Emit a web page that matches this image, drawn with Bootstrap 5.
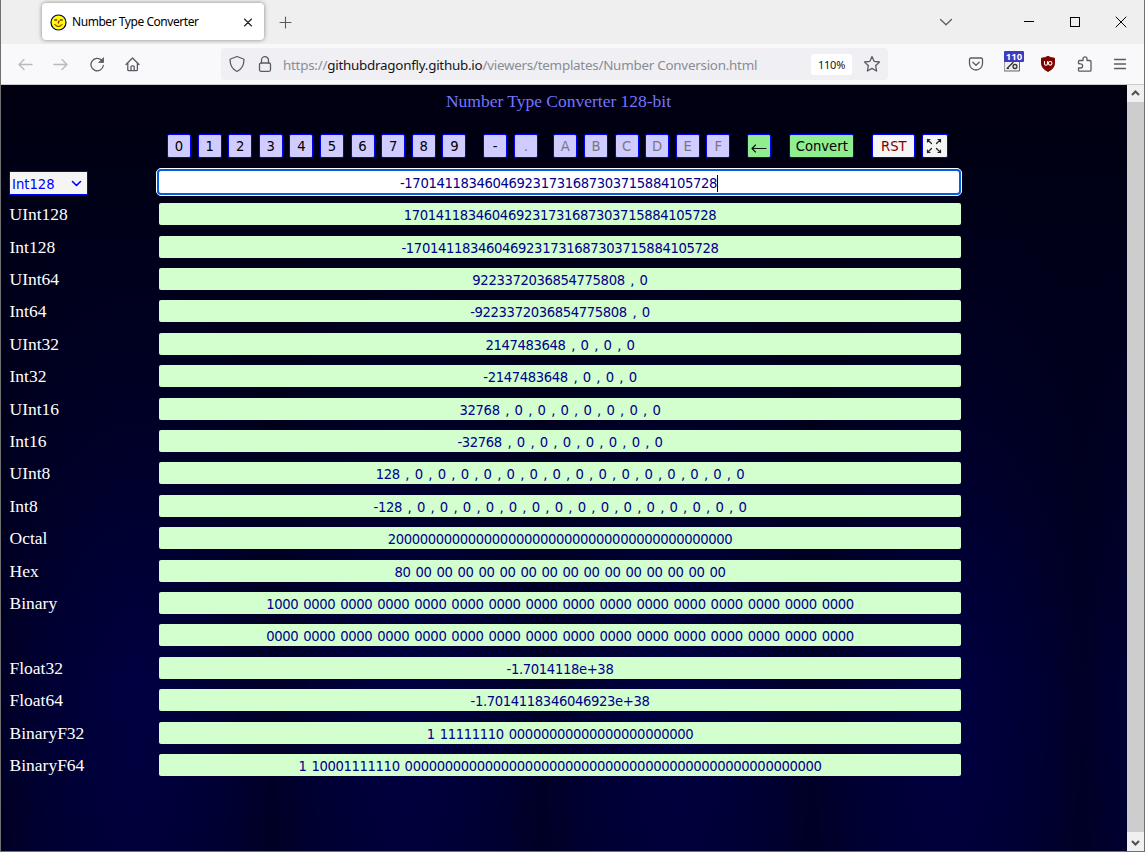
<!DOCTYPE html>
<html lang="en">
<head>
<meta charset="utf-8">
<title>Number Type Converter</title>
<link rel="stylesheet" href="https://cdn.jsdelivr.net/npm/bootstrap@5.3.0/dist/css/bootstrap.min.css">
<style>
html,body{height:100%;overflow:hidden}
body{background:#f9f9fb;font-family:"Noto Sans","Open Sans",sans-serif;font-size:12px;line-height:1.2;color:#15141a}
.win{width:1145px;height:852px;border:solid #707070;border-width:0 1px 1px 1px}
.tabstrip{height:44px;background:#efefef}
.tab-active{width:222px;height:37px;margin:3px 0 0 41px;padding:2px 9px 0 8px;background:#fff;border-radius:4px;box-shadow:0 0 4px rgba(0,0,0,.45);font-size:12px;letter-spacing:-.45px;color:#000}
.navrow{height:41px;background:#f9f9fb;border-bottom:1px solid #ccc}
.urlbox{width:667px;height:32px;background:#f0f0f4;border-radius:4px;margin-left:80px;padding:0 7px 0 7px}
.url{font-size:13.4px;color:#8b8b93;margin-left:9px;letter-spacing:-.245px;white-space:nowrap;padding-top:2px}
.url b{font-weight:400;color:#15141a}
.zoomlevel{width:41px;height:21px;background:#fff;border-radius:3px;font-size:11px;letter-spacing:-.2px;padding-top:1px}
svg{display:block;flex:none;fill:none;stroke:#5b5b66;stroke-width:1.3;stroke-linecap:round;stroke-linejoin:round}
.sharp{stroke:#000;stroke-width:1;stroke-linecap:butt;shape-rendering:crispEdges}
.page{height:766px}
.canvas{width:1126px;background-color:#000018;
 background-image:linear-gradient(#000011 0,rgba(0,0,24,.8) 22%,rgba(0,0,28,0) 78%),radial-gradient(ellipse 160px 560px at 136px 590px,#000042,#000038 40%,#00002e 70%,#000020 100%);background-size:100% 100%,270px 766px;background-repeat:no-repeat,repeat-x}
.scroller{width:17px;background:#cdcdcd}
.scroller div{height:17px;background:#f0f0f0}
.pagetitle{font:17.5px/20px "Liberation Serif",serif;color:#7474ff;letter-spacing:-.01px;padding-top:6px;height:27px;width:1115px;text-align:center}
.ui{font-family:"DejaVu Sans Condensed","DejaVu Sans",sans-serif;font-stretch:condensed;font-size:14.67px}
.keys{margin:22px 0 0 166px;gap:6.6px;height:24px}
.key{width:24px;height:24px;flex:none;border:1.5px solid #00f;border-radius:2px;background:#d0ccff;color:#000;padding:1px 0 0;line-height:1;display:flex;align-items:center;justify-content:center}
.key:disabled{color:#777780}
.key.go{background:#90ee90}
.key.plain{background:#f5f5f5;color:#800000}
.line{height:32.41px}
.lab{width:158px;padding-left:8.5px;font:17.5px/22px "Liberation Serif",serif;color:#fff}
.out{width:802px;height:22px;background:#d3ffce;border-radius:2px;color:#00008b;text-align:center;line-height:23px;letter-spacing:-.37px;word-spacing:1.15px;white-space:pre}
.out.list{word-spacing:1.75px}
.pick{width:79px;height:24px;margin:1px 0 0 -.500px;background:#f5f5f5;border:1px solid #00f;border-radius:1px;color:#00f;padding:2px 5px 0 2px;letter-spacing:0}
.entry{width:806px;height:28px;margin-left:-3px;background:#fff;border:1px solid #fff;border-radius:5px;padding:0}
.entry div{height:26px;border:2px solid #0060df;border-radius:4px;line-height:23px;color:#00008b;letter-spacing:-.37px;text-align:center}
.caret{display:inline-block;width:1px;height:17px;background:#000;vertical-align:-4px}
</style>
</head>
<body>
<div class="win d-flex flex-column">
 <div class="tabstrip d-flex">
  <div class="tab-active d-flex align-items-center">
   <svg width="17" height="17" viewBox="0 0 17 17"><circle cx="8.500" cy="8.500" r="7.500" fill="#ff0" stroke="#00004a" stroke-width="1.200"/><path d="M4.800 6h1.800M10.400 6h1.800M9 7L8.300 9" stroke="#90180a" stroke-width="1.300"/><path d="M4.800 10.500q3.600 4 7.200 0" stroke="#7a3000" stroke-width="1.100"/></svg>
   <span class="ms-1 flex-grow-1" style="padding-left:1px">Number Type Converter</span>
   <svg width="14" height="14" viewBox="0 0 14 14"><path d="M3.500 3l7 7M10.500 3l-7 7" stroke="#222" stroke-width="1.1"/></svg>
  </div>
  <svg width="14" height="14" viewBox="0 0 14 14" style="margin:15px 0 0 14px"><path d="M7.500 2v11M2 7.500h11" stroke-width="1.1"/></svg>
  <svg class="ms-auto" width="14" height="14" viewBox="0 0 14 14" style="margin-top:15px"><path d="M1.5 4.500L7 9.800l5.500-5.300"/></svg>
  <svg class="sharp" width="12" height="12" viewBox="0 0 12 12" style="margin:16px 0 0 70px"><path d="M1 5.500h10"/></svg>
  <svg class="sharp" width="12" height="12" viewBox="0 0 12 12" style="margin:16px 0 0 34px"><path d="M1.500 1.500h9v9h-9z"/></svg>
  <svg width="12" height="12" viewBox="0 0 12 12" style="margin:16px 17px 0 34px"><path d="M1 1l10 10M11 1L1 11" stroke="#000" stroke-width="1"/></svg>
 </div>
 <div class="navrow d-flex align-items-center">
  <svg width="16" height="16" viewBox="0 0 16 16" style="margin-left:16px"><path d="M7 3.500L2 8.500 7 13.500M2 8.500H15" stroke="#b9b9c0"/></svg>
  <svg width="16" height="16" viewBox="0 0 16 16" style="margin-left:20px"><path d="M9 3.500L14 8.500 9 13.500M14 8.500H1" stroke="#b9b9c0"/></svg>
  <svg width="16" height="16" viewBox="0 0 16 16" style="margin-left:20px"><path d="M14.300 9.500A6.200 6.200 0 1 1 12.800 4.500"/><path d="M10 6.500h4.500V2z" fill="#5b5b66" stroke-width=".8"/></svg>
  <svg width="16" height="16" viewBox="0 0 16 16" style="margin-left:20px"><path d="M1 8.500L7.500 2 14 8.500M2.800 7v6.800q0 .9.900.900h7.800q.9 0 .9-.9V7M6 14.500V10.800q0-1 1-1h1.200q1 0 1 1v3.700"/></svg>
  <div class="urlbox d-flex align-items-center">
   <svg width="18" height="18" viewBox="0 0 18 18"><path d="M9 1.500l6.500 2.500q.5.200.5.800C15.800 10.500 13.500 14.500 9 16.500 4.500 14.500 2.200 10.500 2 4.800q0-.6.5-.8z"/></svg>
   <svg width="18" height="18" viewBox="0 0 18 18" style="margin-left:10px"><rect x="3.500" y="8" width="11" height="8.300" rx="1.500"/><path d="M5.500 8V5.200a3.500 3.500 0 0 1 7 0V8"/></svg>
   <span class="url">https://<b>githubdragonfly.github.io</b>/viewers/templates/Number Conversion.html</span>
   <span class="zoomlevel ms-auto d-flex align-items-center justify-content-center">110%</span>
   <svg width="18" height="18" viewBox="0 0 18 18" style="margin-left:11px"><path d="M9 1.500l2.200 4.900 5.300.6-3.900 3.700 1 5.300L9 13.400 4.400 16l1-5.300L1.500 7l5.300-.6z"/></svg>
  </div>
  <svg width="16" height="16" viewBox="0 0 16 16" style="margin-left:80px"><path d="M3 2h10q1.500 0 1.500 1.500v4a6.500 6.500 0 0 1-13 0v-4Q1.500 2 3 2zM4.800 6.300L8 9.300l3.200-3"/></svg>
  <div class="position-relative" style="width:20px;height:21px;margin:-5px 0 0 20px">
   <svg width="20" height="21" viewBox="0 0 20 21"><path d="M.5 9.500h15v10.500H.5z" fill="#eee" stroke="#666" stroke-width="1"/><path d="M3.500 17L9 11.500M3 17.300h1.500" stroke="#333"/><circle cx="11" cy="15.500" r="2" stroke="#333"/></svg>
   <span class="position-absolute top-0 start-0 text-white text-center" style="width:20px;height:11px;border-radius:1px;background:#3b3bc4;font:bold 9.500px/11px 'Noto Sans',sans-serif;letter-spacing:0">110</span>
  </div>
  <svg width="16" height="16" viewBox="0 0 16 16" style="margin-left:16px"><path d="M8 .5q3.500 1.500 6.500 1.700V7q0 5.500-6.500 8.500Q1.500 12.500 1.500 7V2.200Q4.500 2 8 .5z" fill="#800000" stroke="#800000" stroke-width="1"/><path d="M4.500 5.500v2.200a1.500 1.500 0 0 0 3 0V5.500" stroke="#fff" stroke-width="1.100"/><circle cx="10.200" cy="7.300" r="1.800" stroke="#fff" stroke-width="1.100"/></svg>
  <svg width="18" height="18" viewBox="0 0 18 18" style="margin-left:20px"><path d="M2.500 8.500V6.500q0-1 1-1H7V3.800a2 2 0 0 1 4 0v1.700h3q1 0 1 1v8.700q0 1-1 1H3.500q-1 0-1-1V13h2a1.900 1.900 0 0 0 0-4.200z"/></svg>
  <svg width="16" height="16" viewBox="0 0 16 16" style="margin-left:18px"><path d="M2.500 3.500h11M2.500 8h11M2.500 12.500h11"/></svg>
 </div>
 <div class="page d-flex">
  <main class="canvas">
   <div class="pagetitle">Number Type Converter 128-bit</div>
   <div class="keys ui d-flex">
    <button class="key">0</button><button class="key">1</button><button class="key">2</button><button class="key">3</button><button class="key">4</button><button class="key">5</button><button class="key">6</button><button class="key">7</button><button class="key">8</button><button class="key">9</button>
    <button class="key" style="margin-left:10.300px">-</button><button class="key" disabled>.</button>
    <button class="key" style="margin-left:8.900px" disabled>A</button><button class="key" disabled>B</button><button class="key" disabled>C</button><button class="key" disabled>D</button><button class="key" disabled>E</button><button class="key" disabled>F</button>
    <button class="key go" style="margin-left:10.300px"><svg width="16" height="12" viewBox="0 0 16 12" style="stroke:#111;stroke-width:1.100"><path d="M4.500 4L1 7.500 4.500 11M1 7.500h14"/></svg></button>
    <button class="key go" style="margin-left:11.500px;width:65px;letter-spacing:0">Convert</button>
    <button class="key plain" style="margin-left:11.500px;width:43px">RST</button>
    <button class="key plain" style="width:26px"><svg width="16" height="16" viewBox="0 0 16 16" style="stroke:#222;stroke-width:1.200;margin:-1px 0 0 -1px"><path d="M5.500 5.500L1.500 1.500M1.500 4V1.500H4M10.500 5.500l4-4M12 1.500h2.500V4M5.500 10.500l-4 4M1.500 12v2.500H4M10.500 10.500l4 4M14.500 12v2.500H12"/></svg></button>
   </div>
   <div class="d-flex align-items-center" style="height:32px;margin-top:8px">
    <div class="lab"><div class="pick ui d-flex align-items-center justify-content-between"><span>Int128</span><svg width="11" height="11" viewBox="0 0 11 11"><path d="M1.500 3.500l4 4 4-4" stroke="#00f" stroke-width="1.600"/></svg></div></div>
    <div class="entry ui"><div>-170141183460469231731687303715884105728<span class="caret"></span></div></div>
   </div>
   <div class="line d-flex align-items-center"><div class="lab">UInt128</div><div class="out ui">170141183460469231731687303715884105728</div></div>
   <div class="line d-flex align-items-center"><div class="lab">Int128</div><div class="out ui">-170141183460469231731687303715884105728</div></div>
   <div class="line d-flex align-items-center"><div class="lab">UInt64</div><div class="out list ui">9223372036854775808 , 0</div></div>
   <div class="line d-flex align-items-center"><div class="lab">Int64</div><div class="out list ui">-9223372036854775808 , 0</div></div>
   <div class="line d-flex align-items-center"><div class="lab">UInt32</div><div class="out list ui">2147483648 , 0 , 0 , 0</div></div>
   <div class="line d-flex align-items-center"><div class="lab">Int32</div><div class="out list ui">-2147483648 , 0 , 0 , 0</div></div>
   <div class="line d-flex align-items-center"><div class="lab">UInt16</div><div class="out list ui">32768 , 0 , 0 , 0 , 0 , 0 , 0 , 0</div></div>
   <div class="line d-flex align-items-center"><div class="lab">Int16</div><div class="out list ui">-32768 , 0 , 0 , 0 , 0 , 0 , 0 , 0</div></div>
   <div class="line d-flex align-items-center"><div class="lab">UInt8</div><div class="out list ui">128 , 0 , 0 , 0 , 0 , 0 , 0 , 0 , 0 , 0 , 0 , 0 , 0 , 0 , 0 , 0</div></div>
   <div class="line d-flex align-items-center"><div class="lab">Int8</div><div class="out list ui">-128 , 0 , 0 , 0 , 0 , 0 , 0 , 0 , 0 , 0 , 0 , 0 , 0 , 0 , 0 , 0</div></div>
   <div class="line d-flex align-items-center"><div class="lab">Octal</div><div class="out ui">2000000000000000000000000000000000000000000</div></div>
   <div class="line d-flex align-items-center"><div class="lab">Hex</div><div class="out ui">80 00 00 00 00 00 00 00 00 00 00 00 00 00 00 00</div></div>
   <div class="line d-flex align-items-center"><div class="lab">Binary</div><div class="out ui">1000 0000 0000 0000 0000 0000 0000 0000 0000 0000 0000 0000 0000 0000 0000 0000</div></div>
   <div class="line d-flex align-items-center"><div class="lab"></div><div class="out ui">0000 0000 0000 0000 0000 0000 0000 0000 0000 0000 0000 0000 0000 0000 0000 0000</div></div>
   <div class="line d-flex align-items-center"><div class="lab">Float32</div><div class="out ui">-1.7014118e+38</div></div>
   <div class="line d-flex align-items-center"><div class="lab">Float64</div><div class="out ui">-1.7014118346046923e+38</div></div>
   <div class="line d-flex align-items-center"><div class="lab">BinaryF32</div><div class="out ui">1 11111110 00000000000000000000000</div></div>
   <div class="line d-flex align-items-center"><div class="lab">BinaryF64</div><div class="out ui">1 10001111110 0000000000000000000000000000000000000000000000000000</div></div>
  </main>
  <div class="scroller d-flex flex-column justify-content-between">
   <div><svg width="17" height="17" viewBox="0 0 17 17"><path d="M5 10l3.500-3.500L12 10" stroke="#505050" stroke-width="2" stroke-linecap="butt" stroke-linejoin="miter"/></svg></div>
   <div style="height:19px"><svg width="17" height="19" viewBox="0 0 17 19"><path d="M5 9l3.500 3.500L12 9" stroke="#505050" stroke-width="2" stroke-linecap="butt" stroke-linejoin="miter"/></svg></div>
  </div>
 </div>
</div>
<script src="https://cdn.jsdelivr.net/npm/bootstrap@5.3.0/dist/js/bootstrap.bundle.min.js"></script>
</body>
</html>
